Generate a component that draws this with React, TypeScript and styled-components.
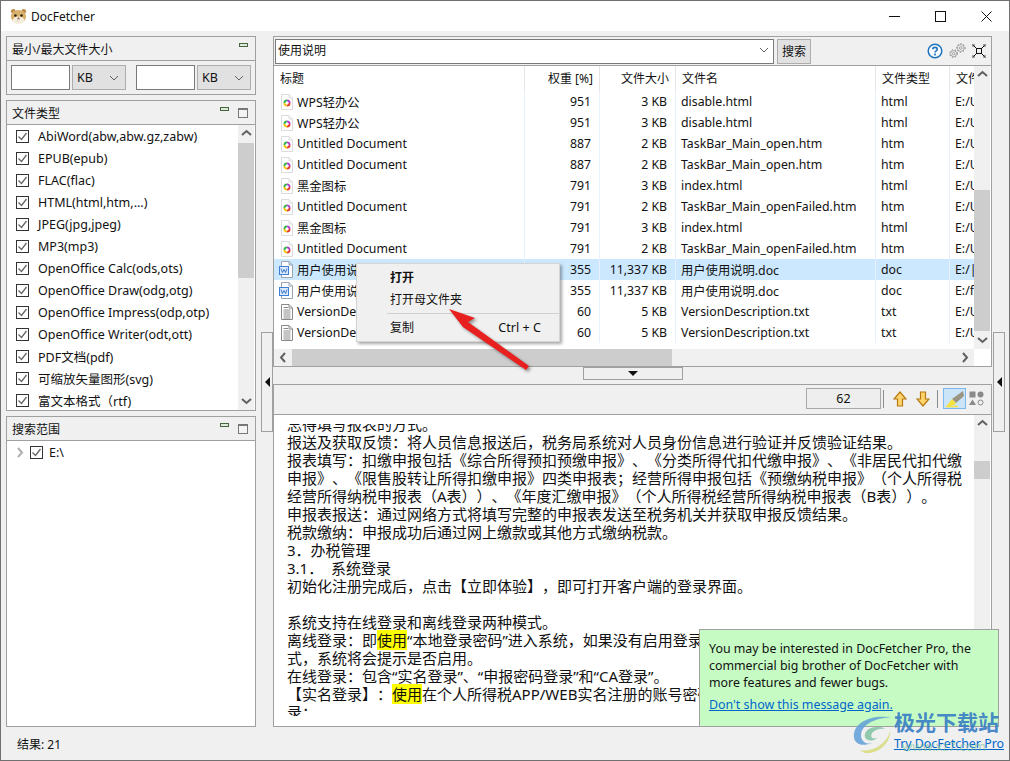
import React from "react";
import styled, { createGlobalStyle } from "styled-components";

const GlobalStyle = createGlobalStyle`
  html, body {
    margin: 0;
    padding: 0;
    background: #f0f0f0;
  }
  * {
    box-sizing: border-box;
  }
`;

const FONT = `"Noto Sans", "Noto Sans CJK SC", sans-serif`;

const Window = styled.div`
  position: relative;
  width: 1010px;
  height: 761px;
  display: flex;
  flex-direction: column;
  overflow: hidden;
  border: 1px solid #707070;
  background: #f0f0f0;
  color: #111;
  font-family: ${FONT};
  font-size: 12.5px;
  text-spacing-trim: space-all;
`;

const TitleBar = styled.div`
  flex: none;
  height: 30px;
  display: flex;
  align-items: center;
  background: #fff;
  padding-left: 8px;
`;

const TitleText = styled.span`
  flex: 1;
  margin-left: 4px;
  font-size: 12px;
  color: #111;
`;

const WinButton = styled.div`
  width: 46px;
  height: 30px;
  display: flex;
  align-items: center;
  justify-content: center;
`;

const Body = styled.div`
  flex: 1;
  min-height: 0;
  display: flex;
  padding: 5px 0 0 5px;
`;

const Sidebar = styled.div`
  flex: none;
  width: 250px;
  display: flex;
  flex-direction: column;
  gap: 5px;
`;

const Panel = styled.section<{ $h: number }>`
  height: ${(p) => p.$h}px;
  display: flex;
  flex-direction: column;
  border: 1px solid #a0a0a0;
`;

const PanelHead = styled.header`
  flex: none;
  height: 24px;
  display: flex;
  align-items: center;
  padding: 0 5px 0 5px;
  border-bottom: 1px solid #a0a0a0;
  font-size: 12px;
`;

const PanelTitle = styled.span`
  flex: 1;
`;

const MinIcon = styled.span<{ $last?: boolean }>`
  width: 9px;
  height: 4px;
  margin: -7px ${(p) => (p.$last ? 2 : 9)}px 0 0;
  border: 1px solid #47663f;
  background: #dfe8dc;
`;

const MaxIcon = styled.span`
  width: 10px;
  height: 10px;
  margin-right: 2px;
  border: 1px solid #777;
  border-top-width: 2px;
  background: #f4f4f4;
`;

const SizeRow = styled.div`
  flex: 1;
  display: flex;
  align-items: center;
  padding: 0 4px;
`;

const SizeInput = styled.div`
  width: 59px;
  height: 25px;
  background: #fff;
  border: 1px solid #7a7a7a;
`;

const SizeSelect = styled.div<{ $gap: number }>`
  width: 54px;
  height: 25px;
  margin: 0 ${(p) => p.$gap}px 0 2px;
  padding: 0 6px 0 4px;
  display: flex;
  align-items: center;
  justify-content: space-between;
  background: #e1e1e1;
  border: 1px solid #adadad;
  font-size: 12.5px;
`;

const ListArea = styled.div`
  flex: 1;
  min-height: 0;
  display: flex;
  background: #fff;
  padding-right: 1px;
`;

const TypeList = styled.ul`
  flex: 1;
  margin: 0;
  padding: 0;
  list-style: none;
  overflow: hidden;
`;

const TypeRow = styled.li`
  height: 22px;
  display: flex;
  align-items: center;
  gap: 9px;
  padding-left: 9px;
  white-space: nowrap;
`;

const Box = styled.span`
  flex: none;
  width: 13px;
  height: 13px;
  display: flex;
  align-items: center;
  justify-content: center;
  background: #fff;
  border: 1px solid #333;
`;

const VBar = styled.div`
  flex: none;
  width: 16px;
  display: flex;
  flex-direction: column;
  align-items: center;
  background: #f0f0f0;
`;

const VBarEnd = styled.div`
  flex: none;
  height: 17px;
  display: flex;
  align-items: center;
  justify-content: center;
`;

const VBarTrack = styled.div`
  flex: 1;
  align-self: stretch;
`;

const VThumb = styled.div<{ $top: number; $h: number }>`
  margin-top: ${(p) => p.$top}px;
  height: ${(p) => p.$h}px;
  background: #cdcdcd;
`;

const TreeArea = styled.div`
  flex: 1;
  background: #fff;
`;

const TreeRow = styled.div`
  height: 22px;
  display: flex;
  align-items: center;
  gap: 4px;
  padding-left: 8px;
`;

const TreeLabel = styled.span`
  margin-left: 2px;
`;

const SashColumn = styled.div<{ $w: number; $end?: boolean }>`
  flex: none;
  width: ${(p) => p.$w}px;
  display: flex;
  align-items: center;
  justify-content: ${(p) => (p.$end ? "flex-end" : "flex-start")};
  padding-left: ${(p) => (p.$end ? 0 : 1)}px;
`;

const SashButton = styled.div`
  width: 12px;
  height: 100px;
  display: flex;
  align-items: center;
  justify-content: center;
  background: #f0f0f0;
  border: 1px solid #a0a0a0;
`;

const LeftTriangle = styled.span`
  width: 0;
  height: 0;
  border-top: 5px solid transparent;
  border-bottom: 5px solid transparent;
  border-right: 5px solid #111;
`;

const Main = styled.div`
  flex: none;
  width: 719px;
  display: flex;
  flex-direction: column;
`;

const SearchBar = styled.div`
  flex: none;
  height: 29px;
  display: flex;
  align-items: center;
  padding-left: 1px;
  border: 1px solid #a0a0a0;
  border-bottom: 0;
`;

const SearchCombo = styled.div`
  width: 499px;
  height: 25px;
  display: flex;
  align-items: center;
  justify-content: space-between;
  padding: 0 4px 2px 2px;
  background: #fff;
  border: 1px solid #7a7a7a;
  font-size: 12px;
`;

const SearchButton = styled.div`
  width: 34px;
  height: 25px;
  margin-left: 3px;
  padding-bottom: 1px;
  display: flex;
  align-items: center;
  justify-content: center;
  background: #e1e1e1;
  border: 1px solid #adadad;
  font-size: 12px;
`;

const SearchTools = styled.div`
  margin-left: auto;
  display: flex;
  align-items: center;
  gap: 6px;
  padding-right: 5px;
`;

const TablePane = styled.div`
  flex: none;
  height: 302px;
  display: flex;
  flex-direction: column;
  border: 1px solid #a0a0a0;
  background: #fff;
`;

const TableTop = styled.div`
  flex: 1;
  min-height: 0;
  display: flex;
  padding-right: 1px;
`;

const Table = styled.div`
  flex: 1;
  min-width: 0;
  overflow: hidden;
  padding-bottom: 6px;
  font-size: 12.3px;
`;

const COLUMNS = "251px 75px 76px 200px 74px 24px";

const HeadRow = styled.div`
  height: 25px;
  display: grid;
  grid-template-columns: ${COLUMNS};
  font-size: 12px;
`;

const HeadCell = styled.div<{ $right?: boolean }>`
  display: flex;
  align-items: center;
  justify-content: ${(p) => (p.$right ? "flex-end" : "flex-start")};
  padding: 0 6px 2px;
  border-right: 1px solid #e5e5e5;
  white-space: nowrap;
  overflow: hidden;
  &:last-child {
    border-right: 0;
  }
`;

const DataRow = styled.div<{ $selected?: boolean }>`
  height: 21px;
  display: grid;
  grid-template-columns: ${COLUMNS};
  background: ${(p) => (p.$selected ? "#cce8ff" : "#fff")};
`;

const DataCell = styled.div<{ $right?: boolean; $title?: boolean }>`
  display: flex;
  align-items: center;
  justify-content: ${(p) => (p.$right ? "flex-end" : "flex-start")};
  gap: 4px;
  padding: ${(p) => (p.$right ? "0 8px 0 0" : p.$title ? "0 0 0 7px" : "0 0 0 5px")};
  border-right: 1px solid #e8f1fb;
  white-space: nowrap;
  overflow: hidden;
  &:last-child {
    border-right: 0;
  }
`;

const HBar = styled.div`
  flex: none;
  height: 17px;
  width: 700px;
  display: flex;
  align-items: center;
  background: #f0f0f0;
`;

const HBarEnd = styled.div`
  flex: none;
  width: 18px;
  height: 17px;
  display: flex;
  align-items: center;
  justify-content: center;
`;

const HThumb = styled.div`
  width: 380px;
  height: 17px;
  background: #cdcdcd;
`;

const HTrack = styled.div`
  flex: 1;
`;

const SplitSash = styled.div`
  flex: none;
  height: 17px;
  display: flex;
  justify-content: center;
  align-items: flex-start;
`;

const SplitButton = styled.div`
  width: 100px;
  height: 13px;
  display: flex;
  align-items: center;
  justify-content: center;
  background: #f0f0f0;
  border: 1px solid #a0a0a0;
`;

const DownTriangle = styled.span`
  width: 0;
  height: 0;
  border-left: 5px solid transparent;
  border-right: 5px solid transparent;
  border-top: 5px solid #111;
`;

const PreviewTools = styled.div`
  flex: none;
  height: 30px;
  display: flex;
  align-items: center;
  justify-content: flex-end;
  padding: 0 7px 2px 0;
  border: 1px solid #a0a0a0;
  border-bottom: 0;
`;

const PageBox = styled.div`
  width: 75px;
  height: 21px;
  padding-bottom: 1px;
  display: flex;
  align-items: center;
  justify-content: center;
  background: #eee;
  border: 1px solid #a8a8a8;
  font-size: 12.5px;
`;

const ToolSep = styled.span<{ $before: number; $after: number }>`
  width: 1px;
  height: 18px;
  margin: 0 ${(p) => p.$after}px 0 ${(p) => p.$before}px;
  background: #8c8c8c;
`;

const ToolIcon = styled.span<{ $active?: boolean; $w: number; $right?: number }>`
  width: ${(p) => p.$w}px;
  height: 21px;
  margin-right: ${(p) => p.$right ?? 0}px;
  display: flex;
  align-items: center;
  justify-content: center;
  background: ${(p) => (p.$active ? "#cce4f7" : "transparent")};
  border: 1px solid ${(p) => (p.$active ? "#7ab8ee" : "transparent")};
`;

const PreviewPane = styled.div`
  flex: 1;
  min-height: 0;
  display: flex;
  background: #fff;
  border: 1px solid #a0a0a0;
  padding-right: 1px;
`;

const PreviewScroll = styled.div`
  flex: 1;
  min-width: 0;
  padding: 9px 0 10px 13px;
  display: flex;
`;

const PreviewClip = styled.div`
  flex: 1;
  min-width: 0;
  overflow: hidden;
`;

const PreviewText = styled.div`
  margin-top: -9px;
  font-size: 15px;
  line-height: 18px;
  white-space: pre;
  color: #111;
`;

const Mark = styled.mark`
  background: #ffff00;
  color: inherit;
`;

const StatusBar = styled.div`
  flex: none;
  height: 33px;
  display: flex;
  align-items: center;
  justify-content: space-between;
  padding: 0 5px 0 16px;
  font-size: 12px;
`;

const ProLink = styled.a`
  color: #0066cc;
  font-size: 12.4px;
  text-decoration: underline;
`;

/* things that float over the page */

const ContextMenu = styled.div`
  position: absolute;
  left: 355px;
  top: 262px;
  width: 204px;
  height: 79px;
  padding-top: 2px;
  background: #f0f0f0;
  border: 1px solid #d4d4d4;
  box-shadow: 2px 2px 3px rgba(0, 0, 0, 0.35);
  font-size: 12px;
`;

const MenuRow = styled.div<{ $bold?: boolean }>`
  height: 22px;
  display: flex;
  align-items: center;
  justify-content: space-between;
  padding: 0 18px 0 33px;
  font-weight: ${(p) => (p.$bold ? 700 : 400)};
`;

const MenuKeys = styled.span`
  font-size: 12.6px;
`;

const MenuLine = styled.div`
  height: 1px;
  margin: 3px 0 2px 30px;
  background: #d0d0d0;
`;

const ArrowLayer = styled.svg`
  position: absolute;
  left: 440px;
  top: 300px;
  filter: drop-shadow(2px 2px 1.5px rgba(0, 0, 0, 0.4));
`;

const Toast = styled.div`
  position: absolute;
  left: 698px;
  top: 628px;
  width: 300px;
  height: 98px;
  padding: 10px 9px;
  background: #c6fcc4;
  border: 1px solid #a0a0a0;
  font-size: 12.4px;
  line-height: 17px;
  color: #111;
`;

const ToastLink = styled.a`
  display: block;
  margin-top: 5px;
  color: #0066cc;
  text-decoration: underline;
`;

const Watermark = styled.div`
  position: absolute;
  left: 850px;
  top: 706px;
  display: flex;
  align-items: flex-start;
  pointer-events: none;
`;

const SwirlBox = styled.svg`
  flex: none;
  margin-top: 5px;
`;

const WatermarkText = styled.div`
  margin: 1px 0 0 -1px;
  font-family: "Noto Sans CJK SC", sans-serif;
  font-size: 21px;
  font-weight: 700;
  line-height: 26px;
  color: rgba(52, 122, 196, 0.9);
  white-space: nowrap;
`;

const WatermarkUrl = styled.div`
  margin: 4px 0 0 8px;
  font-family: ${FONT};
  font-size: 13px;
  font-weight: 400;
  line-height: 16px;
  color: rgba(120, 190, 150, 0.65);
`;

/* drawings */

const Chevron: React.FC<{ dir: "up" | "down" | "left" | "right"; color?: string }> = ({
  dir,
  color = "#606060",
}) => {
  const points = {
    up: "1,7 5.5,3 10,7",
    down: "1,3 5.5,7 10,3",
    left: "7,1 3,5.5 7,10",
    right: "3,1 7,5.5 3,10",
  }[dir];
  return (
    <svg width="11" height="11" viewBox="0 0 11 11">
      <polyline points={points} fill="none" stroke={color} strokeWidth="2" />
    </svg>
  );
};

const ComboChevron = () => (
  <svg width="10" height="6" viewBox="0 0 10 6">
    <polyline points="1,1 5,5 9,1" fill="none" stroke="#606060" strokeWidth="1" />
  </svg>
);

const Check = () => (
  <Box>
    <svg width="11" height="11" viewBox="0 0 11 11">
      <polyline points="1.5,5.5 4.5,8.5 9.5,2" fill="none" stroke="#666" strokeWidth="1.3" />
    </svg>
  </Box>
);

const Mascot = () => (
  <svg width="17" height="17" viewBox="0 0 18 18" style={{ marginLeft: 1 }}>
    <circle cx="3.5" cy="3.5" r="2.5" fill="#b98a4a" />
    <circle cx="14.5" cy="3.5" r="2.5" fill="#b98a4a" />
    <ellipse cx="9" cy="9" rx="8" ry="7" fill="#d9b06c" />
    <ellipse cx="9" cy="13" rx="6" ry="4" fill="#f6eedc" />
    <circle cx="5.8" cy="8" r="1.3" fill="#2a1c10" />
    <circle cx="12.2" cy="8" r="1.3" fill="#2a1c10" />
    <ellipse cx="9" cy="10.8" rx="1.2" ry="0.8" fill="#7a4a2a" />
    <rect x="8" y="12.5" width="2" height="2" fill="#fff" stroke="#a88" strokeWidth="0.3" />
  </svg>
);

const PageOutline: React.FC<{ stroke: string }> = ({ stroke }) => (
  <path d="M0.5 0.5 H8 L11.5 4 V15.5 H0.5 Z M8 0.5 V4 H11.5" fill="#fff" stroke={stroke} />
);

const HtmlIcon = () => (
  <svg width="12" height="16" viewBox="0 0 12 16" style={{ flex: "none" }}>
    <PageOutline stroke="#dcdcdc" />
    <circle cx="6" cy="9" r="2.6" fill="none" stroke="#e8382c" strokeWidth="1.8" strokeDasharray="4 12.4" />
    <circle cx="6" cy="9" r="2.6" fill="none" stroke="#f4c20d" strokeWidth="1.8" strokeDasharray="4 12.4" strokeDashoffset="-4" />
    <circle cx="6" cy="9" r="2.6" fill="none" stroke="#36b24a" strokeWidth="1.8" strokeDasharray="4 12.4" strokeDashoffset="-8" />
    <circle cx="6" cy="9" r="2.6" fill="none" stroke="#b03ad0" strokeWidth="1.8" strokeDasharray="4 12.4" strokeDashoffset="-12" />
  </svg>
);

const WordIcon = () => (
  <svg width="14" height="17" viewBox="0 0 14 17" style={{ flex: "none", marginLeft: -2 }}>
    <path d="M2.5 0.5 H10 L13.5 4 V16.5 H2.5 Z M10 0.5 V4 H13.5" fill="#fff" stroke="#9aa4b0" />
    <rect x="0.5" y="5.5" width="9" height="8" fill="#dbe9fb" stroke="#3d7fd6" />
    <path d="M2 7.5 L3.4 11.5 L5 8.5 L6.6 11.5 L8 7.5" fill="none" stroke="#2a6cc8" strokeWidth="0.9" />
  </svg>
);

const TextIcon = () => (
  <svg width="12" height="16" viewBox="0 0 12 16" style={{ flex: "none" }}>
    <PageOutline stroke="#8a8a8a" />
    <path d="M2.5 3.5 H7 M2.5 6 H9.5 M2.5 8 H9.5 M2.5 10 H9.5 M2.5 12 H9.5 M2.5 14 H9.5" stroke="#8a8a8a" strokeWidth="1" />
  </svg>
);

const HelpIcon = () => (
  <svg width="16" height="16" viewBox="0 0 16 16">
    <circle cx="8" cy="8" r="6.8" fill="#f7fbff" stroke="#1e73be" strokeWidth="1.5" />
    <path d="M5.8 6.2 C5.8 3.8 10.2 3.8 10.2 6.2 C10.2 7.8 8 7.8 8 9.6" fill="none" stroke="#1e73be" strokeWidth="1.6" />
    <rect x="7.1" y="10.6" width="1.8" height="1.8" fill="#1e73be" />
  </svg>
);

const Gear: React.FC<{ cx: number; cy: number; r: number }> = ({ cx, cy, r }) => (
  <g fill="none" stroke="#7d7d7d">
    <circle cx={cx} cy={cy} r={r + 0.9} strokeWidth="1" strokeDasharray="1.2 2" />
    <circle cx={cx} cy={cy} r={r} strokeWidth="0.7" fill="#f6f6f6" />
    <circle cx={cx} cy={cy} r={r * 0.4} strokeWidth="0.7" />
  </g>
);

const GearsIcon = () => (
  <svg width="17" height="16" viewBox="0 0 17 16">
    <Gear cx={4.6} cy={10.6} r={3} />
    <Gear cx={11.8} cy={5} r={3.4} />
  </svg>
);

const ShrinkIcon = () => (
  <svg width="14" height="14" viewBox="0 0 14 14">
    <rect x="4.5" y="4.5" width="5" height="5" fill="none" stroke="#111" />
    <path d="M0.5 0.5 L4 4 M13.5 0.5 L10 4 M0.5 13.5 L4 10 M13.5 13.5 L10 10" stroke="#111" />
    <path d="M1 3 V1 H3 M11 1 H13 V3 M1 11 V13 H3 M11 13 H13 V11" fill="none" stroke="#555" />
  </svg>
);

const FindArrow: React.FC<{ down?: boolean }> = ({ down }) => (
  <svg width="14" height="16" viewBox="0 0 14 16" style={down ? { transform: "scaleY(-1)" } : undefined}>
    <path d="M7 1 L13 8 H9.5 V15 H4.5 V8 H1 Z" fill="#ffd36b" stroke="#b57a12" strokeWidth="1.2" />
  </svg>
);

const HighlightIcon = () => (
  <svg width="20" height="18" viewBox="0 0 20 18">
    <path d="M18 1 L19 6 L11 13 L7 9 Z" fill="#9a9484" />
    <path d="M7 9 L11 13 L9 15 L1 17 Z" fill="#f5e23c" />
    <path d="M1 16.5 H13" stroke="#f5e23c" strokeWidth="1.5" />
  </svg>
);

const ShapesIcon = () => (
  <svg width="15" height="15" viewBox="0 0 15 15">
    <rect x="0.5" y="0.5" width="6" height="6" fill="#8a8a8a" />
    <circle cx="11.5" cy="3.5" r="3" fill="#8a8a8a" />
    <path d="M3.5 8.5 L7 14 H0 Z" fill="#8a8a8a" />
    <circle cx="11.5" cy="11.5" r="2.5" fill="none" stroke="#8a8a8a" />
  </svg>
);

const Swirl = () => (
  <SwirlBox width="44" height="42" viewBox="0 0 46 46">
    <path d="M2 26 C2 12 20 2 44 6 C28 6 12 12 10 24 C9 32 16 36 22 34 C12 38 2 36 2 26 Z" fill="#5f9fd8" opacity="0.85" />
    <path d="M14 26 C14 18 26 14 36 18 C28 18 21 21 21 26 C21 29 25 30 28 28 C24 33 14 32 14 26 Z" fill="#7fc2a0" opacity="0.85" />
    <path d="M8 42 C22 44 38 36 42 20 C42 34 30 46 14 45 Z" fill="#d6dc7a" opacity="0.85" />
  </SwirlBox>
);

const FILE_TYPES = [
  "AbiWord(abw,abw.gz,zabw)",
  "EPUB(epub)",
  "FLAC(flac)",
  "HTML(html,htm,...)",
  "JPEG(jpg,jpeg)",
  "MP3(mp3)",
  "OpenOffice Calc(ods,ots)",
  "OpenOffice Draw(odg,otg)",
  "OpenOffice Impress(odp,otp)",
  "OpenOffice Writer(odt,ott)",
  "PDF文档(pdf)",
  "可缩放矢量图形(svg)",
  "富文本格式（rtf)",
];

type Kind = "html" | "word" | "text";

const RESULTS: { kind: Kind; title: string; score: string; size: string; name: string; type: string; path: string; selected?: boolean }[] = [
  { kind: "html", title: "WPS轻办公", score: "951", size: "3 KB", name: "disable.html", type: "html", path: "E:/Users" },
  { kind: "html", title: "WPS轻办公", score: "951", size: "3 KB", name: "disable.html", type: "html", path: "E:/Users" },
  { kind: "html", title: "Untitled Document", score: "887", size: "2 KB", name: "TaskBar_Main_open.htm", type: "htm", path: "E:/Users" },
  { kind: "html", title: "Untitled Document", score: "887", size: "2 KB", name: "TaskBar_Main_open.htm", type: "htm", path: "E:/Users" },
  { kind: "html", title: "黑金图标", score: "791", size: "3 KB", name: "index.html", type: "html", path: "E:/Users" },
  { kind: "html", title: "Untitled Document", score: "791", size: "2 KB", name: "TaskBar_Main_openFailed.htm", type: "htm", path: "E:/Users" },
  { kind: "html", title: "黑金图标", score: "791", size: "3 KB", name: "index.html", type: "html", path: "E:/Users" },
  { kind: "html", title: "Untitled Document", score: "791", size: "2 KB", name: "TaskBar_Main_openFailed.htm", type: "htm", path: "E:/Users" },
  { kind: "word", title: "用户使用说明.doc", score: "355", size: "11,337 KB", name: "用户使用说明.doc", type: "doc", path: "E:/|", selected: true },
  { kind: "word", title: "用户使用说明.doc", score: "355", size: "11,337 KB", name: "用户使用说明.doc", type: "doc", path: "E:/f" },
  { kind: "text", title: "VersionDescription.txt", score: "60", size: "5 KB", name: "VersionDescription.txt", type: "txt", path: "E:/Users" },
  { kind: "text", title: "VersionDescription.txt", score: "60", size: "5 KB", name: "VersionDescription.txt", type: "txt", path: "E:/Users" },
];

const KindIcon: React.FC<{ kind: Kind }> = ({ kind }) => {
  if (kind === "word") return <WordIcon />;
  if (kind === "text") return <TextIcon />;
  return <HtmlIcon />;
};

const PREVIEW_LINES: React.ReactNode[] = [
  "总得填写报表的方式。",
  "报送及获取反馈：将人员信息报送后，税务局系统对人员身份信息进行验证并反馈验证结果。",
  "报表填写：扣缴申报包括《综合所得预扣预缴申报》、《分类所得代扣代缴申报》、《非居民代扣代缴",
  "申报》、《限售股转让所得扣缴申报》四类申报表；经营所得申报包括《预缴纳税申报》（个人所得税",
  "经营所得纳税申报表（A表））、《年度汇缴申报》（个人所得税经营所得纳税申报表（B表））。",
  "申报表报送：通过网络方式将填写完整的申报表发送至税务机关并获取申报反馈结果。",
  "税款缴纳：申报成功后通过网上缴款或其他方式缴纳税款。",
  "3．办税管理",
  "3.1．  系统登录",
  "初始化注册完成后，点击【立即体验】，即可打开客户端的登录界面。",
  " ",
  "系统支持在线登录和离线登录两种模式。",
  <>离线登录：即<Mark>使用</Mark>“本地登录密码”进入系统，如果没有启用登录密码，则无法</>,
  "式，系统将会提示是否启用。",
  "在线登录：包含“实名登录”、“申报密码登录”和“CA登录”。",
  <>【实名登录】：<Mark>使用</Mark>在个人所得税APP/WEB实名注册的账号密码进行登录</>,
  "录：",
];

export default function App() {
  return (
    <>
      <GlobalStyle />
      <Window>
        <TitleBar>
          <Mascot />
          <TitleText>DocFetcher</TitleText>
          <WinButton>
            <svg width="11" height="11" viewBox="0 0 11 11">
              <path d="M0 5.5 H11" stroke="#111" />
            </svg>
          </WinButton>
          <WinButton>
            <svg width="11" height="11" viewBox="0 0 11 11">
              <rect x="0.5" y="0.5" width="10" height="10" fill="none" stroke="#111" />
            </svg>
          </WinButton>
          <WinButton>
            <svg width="11" height="11" viewBox="0 0 11 11">
              <path d="M0.5 0.5 L10.5 10.5 M10.5 0.5 L0.5 10.5" stroke="#111" />
            </svg>
          </WinButton>
        </TitleBar>

        <Body>
          <Sidebar>
            <Panel $h={59}>
              <PanelHead>
                <PanelTitle>最小/最大文件大小</PanelTitle>
                <MinIcon $last />
              </PanelHead>
              <SizeRow>
                <SizeInput />
                <SizeSelect $gap={10}>
                  KB
                  <ComboChevron />
                </SizeSelect>
                <SizeInput />
                <SizeSelect $gap={0}>
                  KB
                  <ComboChevron />
                </SizeSelect>
              </SizeRow>
            </Panel>

            <Panel $h={311}>
              <PanelHead>
                <PanelTitle>文件类型</PanelTitle>
                <MinIcon />
                <MaxIcon />
              </PanelHead>
              <ListArea>
                <TypeList>
                  {FILE_TYPES.map((name) => (
                    <TypeRow key={name}>
                      <Check />
                      {name}
                    </TypeRow>
                  ))}
                </TypeList>
                <VBar>
                  <VBarEnd>
                    <Chevron dir="up" />
                  </VBarEnd>
                  <VBarTrack>
                    <VThumb $top={1} $h={135} />
                  </VBarTrack>
                  <VBarEnd>
                    <Chevron dir="down" />
                  </VBarEnd>
                </VBar>
              </ListArea>
            </Panel>

            <Panel $h={311}>
              <PanelHead>
                <PanelTitle>搜索范围</PanelTitle>
                <MinIcon />
                <MaxIcon />
              </PanelHead>
              <TreeArea>
                <TreeRow>
                  <Chevron dir="right" color="#b0b0b0" />
                  <Check />
                  <TreeLabel>E:\</TreeLabel>
                </TreeRow>
              </TreeArea>
            </Panel>
          </Sidebar>

          <SashColumn $w={17} $end>
            <SashButton>
              <LeftTriangle />
            </SashButton>
          </SashColumn>

          <Main>
            <SearchBar>
              <SearchCombo>
                使用说明
                <ComboChevron />
              </SearchCombo>
              <SearchButton>搜索</SearchButton>
              <SearchTools>
                <HelpIcon />
                <GearsIcon />
                <ShrinkIcon />
              </SearchTools>
            </SearchBar>

            <TablePane>
              <TableTop>
                <Table>
                  <HeadRow>
                    <HeadCell>标题</HeadCell>
                    <HeadCell $right>权重 [%]</HeadCell>
                    <HeadCell $right>文件大小</HeadCell>
                    <HeadCell>文件名</HeadCell>
                    <HeadCell>文件类型</HeadCell>
                    <HeadCell>文件路径</HeadCell>
                  </HeadRow>
                  {RESULTS.map((row, i) => (
                    <DataRow key={i} $selected={row.selected}>
                      <DataCell $title>
                        <KindIcon kind={row.kind} />
                        {row.title}
                      </DataCell>
                      <DataCell $right>{row.score}</DataCell>
                      <DataCell $right>{row.size}</DataCell>
                      <DataCell>{row.name}</DataCell>
                      <DataCell>{row.type}</DataCell>
                      <DataCell>{row.path}</DataCell>
                    </DataRow>
                  ))}
                </Table>
                <VBar>
                  <VBarEnd>
                    <Chevron dir="up" />
                  </VBarEnd>
                  <VBarTrack>
                    <VThumb $top={107} $h={141} />
                  </VBarTrack>
                  <VBarEnd>
                    <Chevron dir="down" />
                  </VBarEnd>
                </VBar>
              </TableTop>
              <HBar>
                <HBarEnd>
                  <Chevron dir="left" />
                </HBarEnd>
                <HThumb />
                <HTrack />
                <HBarEnd>
                  <Chevron dir="right" />
                </HBarEnd>
              </HBar>
            </TablePane>

            <SplitSash>
              <SplitButton>
                <DownTriangle />
              </SplitButton>
            </SplitSash>

            <PreviewTools>
              <PageBox>62</PageBox>
              <ToolSep $before={2} $after={8} />
              <ToolIcon $w={16} $right={7}>
                <FindArrow />
              </ToolIcon>
              <ToolIcon $w={16}>
                <FindArrow down />
              </ToolIcon>
              <ToolSep $before={6} $after={5} />
              <ToolIcon $w={23} $right={3} $active>
                <HighlightIcon />
              </ToolIcon>
              <ShapesIcon />
            </PreviewTools>

            <PreviewPane>
              <PreviewScroll>
                <PreviewClip>
                  <PreviewText>
                    {PREVIEW_LINES.map((line, i) => (
                      <div key={i}>{line}</div>
                    ))}
                  </PreviewText>
                </PreviewClip>
              </PreviewScroll>
              <VBar>
                <VBarEnd>
                  <Chevron dir="up" />
                </VBarEnd>
                <VBarTrack>
                  <VThumb $top={29} $h={18} />
                </VBarTrack>
                <VBarEnd>
                  <Chevron dir="down" />
                </VBarEnd>
              </VBar>
            </PreviewPane>
          </Main>

          <SashColumn $w={17}>
            <SashButton>
              <LeftTriangle />
            </SashButton>
          </SashColumn>
        </Body>

        <StatusBar>
          <span>结果: 21</span>
          <ProLink href="#">Try DocFetcher Pro</ProLink>
        </StatusBar>

        <ContextMenu>
          <MenuRow $bold>打开</MenuRow>
          <MenuRow>打开母文件夹</MenuRow>
          <MenuLine />
          <MenuRow>
            复制
            <MenuKeys>Ctrl + C</MenuKeys>
          </MenuRow>
        </ContextMenu>

        <ArrowLayer width="100" height="76" viewBox="0 0 100 76">
          <path d="M8 8 L34 17 L27 21 L88 65 L85 69 L22 26 L25 30 Z" fill="#e8201f" />
        </ArrowLayer>

        <Toast>
          You may be interested in DocFetcher Pro, the
          <br />
          commercial big brother of DocFetcher with
          <br />
          more features and fewer bugs.
          <ToastLink href="#">Don't show this message again.</ToastLink>
        </Toast>

        <Watermark>
          <Swirl />
          <WatermarkText>
            极光下载站
            <WatermarkUrl>www.xz7.com</WatermarkUrl>
          </WatermarkText>
        </Watermark>
      </Window>
    </>
  );
}
